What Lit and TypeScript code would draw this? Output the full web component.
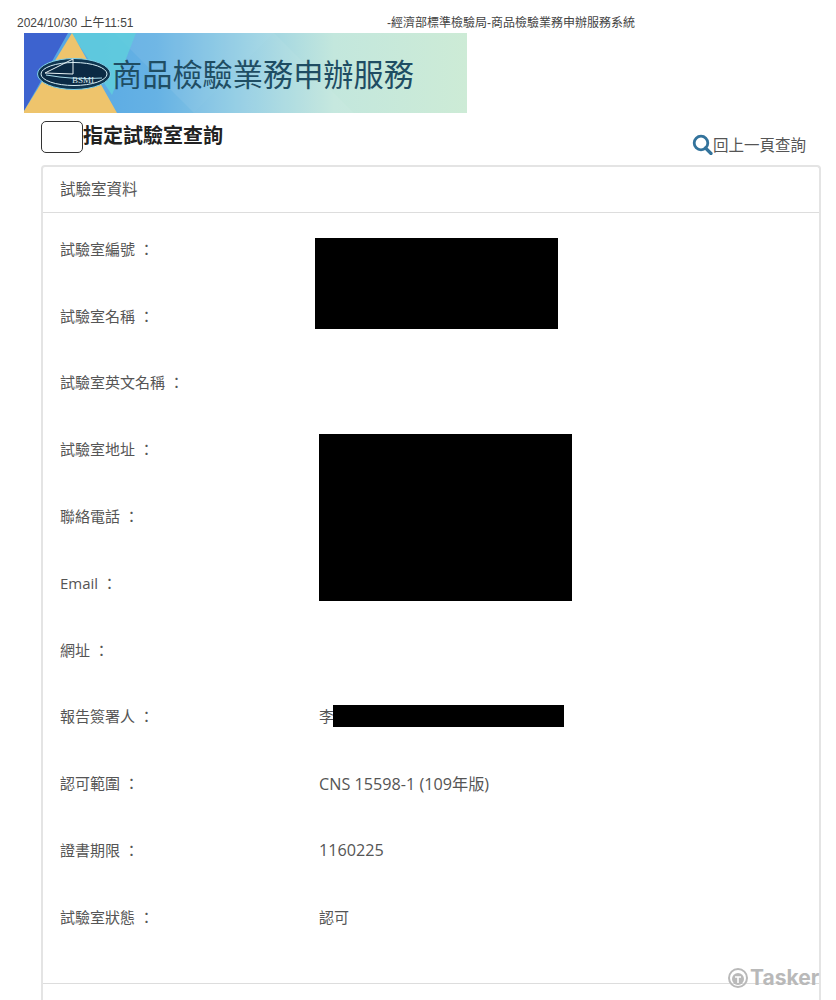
import { LitElement, html, css, svg } from "lit";
import { customElement } from "lit/decorators.js";

const rows: [string, string, boolean][] = [
  ["試驗室編號 ：", "", false],
  ["試驗室名稱 ：", "", false],
  ["試驗室英文名稱 ：", "", false],
  ["試驗室地址 ：", "", false],
  ["聯絡電話 ：", "", false],
  ["Email ：", "", false],
  ["網址 ：", "", false],
  ["報告簽署人 ：", "李", true],
  ["認可範圍 ：", "CNS 15598-1 (109年版)", false],
  ["證書期限 ：", "1160225", false],
  ["試驗室狀態 ：", "認可", true],
];

const bannerArt = svg`
  <defs>
    <linearGradient id="sky" x1="0" y1="0" x2="1" y2="0">
      <stop offset="0" stop-color="#4fa3e4"/>
      <stop offset="0.3" stop-color="#66b2e4"/>
      <stop offset="0.5" stop-color="#95cfe4"/>
      <stop offset="0.7" stop-color="#c3e7dd"/>
      <stop offset="1" stop-color="#cdebd6"/>
    </linearGradient>
  </defs>
  <rect width="443" height="80" fill="url(#sky)"/>
  <polygon points="90,0 170,80 250,0" fill="#fff" opacity="0.07"/>
  <polygon points="170,80 250,0 330,80" fill="#fff" opacity="0.06"/>
  <polygon points="47,0 112,0 88,62" fill="#5fd0dc" opacity="0.8"/>
  <polygon points="0,0 44,0 0,78" fill="#3d63cf"/>
  <polygon points="48,0 93,80 0,80 0,78" fill="#eec46c"/>
  <ellipse cx="50" cy="41" rx="36.5" ry="15.5" fill="#0f3550" stroke="#7fd0e8" stroke-width="1"/>
  <ellipse cx="50" cy="41" rx="33" ry="11.5" fill="#0b2a44" stroke="#d7eef5" stroke-width="1"/>
  <path d="M21 40 L49 26 L49 41 Z" fill="none" stroke="#e8f2f4" stroke-width="1"/>
  <path d="M22 42 Q50 47 78 45" fill="none" stroke="#a9dcec" stroke-width="1"/>
  <text x="48" y="50" font-family="Liberation Serif, serif" font-size="9" fill="#d8e6ea">BSMI</text>
`;

@customElement("app-root")
export class AppRoot extends LitElement {
  static styles = css`
    :host {
      display: block;
      width: 836px;
      height: 1000px;
      overflow: hidden;
      background: #fff;
      font-family: "Open Sans", "Noto Sans CJK TC", sans-serif;
      color: #333;
    }
    .print-head {
      height: 33px;
      box-sizing: border-box;
      padding: 16px 0 0 17px;
      display: flex;
      font: 12px/14px "Liberation Sans", "Noto Sans CJK TC", sans-serif;
      color: #444;
    }
    .print-date { width: 370px; }
    .banner {
      margin-left: 24px;
      width: 443px;
      height: 80px;
      position: relative;
    }
    .banner svg { display: block; }
    .banner-title {
      position: absolute;
      left: 88px;
      top: 18px;
      font: 30.2px/44px "Noto Sans CJK TC", sans-serif;
      color: #1f4d63;
      white-space: nowrap;
    }
    .title-row {
      display: flex;
      align-items: flex-start;
      padding: 8px 30px 0 41px;
      height: 52px;
      box-sizing: border-box;
    }
    .title-box {
      width: 40px;
      height: 30px;
      border: 1px solid #333;
      border-radius: 5px;
      background: #fff;
    }
    .title-row h1 {
      margin: 0;
      font: 700 20px/28px "Noto Sans CJK TC", sans-serif;
      color: #222;
    }
    .back {
      margin-left: auto;
      margin-top: 12px;
      display: flex;
      align-items: center;
      font: 15.5px/22px "Noto Sans CJK TC", sans-serif;
      color: #555;
    }
    .card {
      position: relative;
      margin-left: 41px;
      width: 780px;
      box-sizing: border-box;
      border: 2px solid #e4e4e4;
      border-bottom: 0;
      border-radius: 4px 4px 0 0;
      height: 900px;
    }
    .card-head {
      height: 45px;
      padding-left: 17px;
      border-bottom: 1px solid #ddd;
      font-size: 15.5px;
      line-height: 44px;
      color: #555;
    }
    .rows {
      padding: 2px 0 0 17px;
      height: 771px;
      border-bottom: 1px solid #ddd;
      box-sizing: border-box;
    }
    .row {
      display: grid;
      grid-template-columns: 259px 1fr;
      height: 66.8px;
      align-items: center;
      font-size: 15px;
      color: #555;
    }
    .value { font-size: 16.2px; }
    .value.cjk { font-size: 15px; }
    .redact { position: absolute; background: #000; }
    .r1 { left: 272px; top: 71px; width: 243px; height: 91px; }
    .r2 { left: 276px; top: 267px; width: 253px; height: 167px; }
    .r3 { left: 290px; top: 538px; width: 231px; height: 22px; }
    .mark {
      position: absolute;
      left: 727px;
      top: 966px;
      display: flex;
      align-items: center;
      gap: 1px;
      font: 700 21px/24px "Inter", "Liberation Sans", sans-serif;
      color: #b9b9b9;
    }
  `;

  render() {
    return html`
      <div class="print-head">
        <span class="print-date">2024/10/30 上午11:51</span>
        <span>-經濟部標準檢驗局-商品檢驗業務申辦服務系統</span>
      </div>
      <div class="banner">
        <svg width="443" height="80" viewBox="0 0 443 80">${bannerArt}</svg>
        <div class="banner-title">商品檢驗業務申辦服務</div>
      </div>
      <div class="title-row">
        <div class="title-box"></div>
        <h1>指定試驗室查詢</h1>
        <div class="back">
          <svg width="21" height="21" viewBox="0 0 21 21">
            <circle cx="9" cy="9" r="6.8" fill="none" stroke="#33739c" stroke-width="2.8"/>
            <path d="M13.5 14 L19 19.5" stroke="#33739c" stroke-width="3.2" stroke-linecap="round"/>
          </svg>
          <span>回上一頁查詢</span>
        </div>
      </div>
      <div class="card">
        <div class="card-head">試驗室資料</div>
        <div class="rows">
          ${rows.map(
            ([k, v, cjk]) => html`<div class="row"><span>${k}</span><span class="value ${cjk ? "cjk" : ""}">${v}</span></div>`
          )}
        </div>
        <div class="redact r1"></div>
        <div class="redact r2"></div>
        <div class="redact r3"></div>
      </div>
      <div class="mark">
        <svg width="22" height="22" viewBox="0 0 22 22">
          <circle cx="11" cy="11" r="9" fill="none" stroke="#b9b9b9" stroke-width="2"/>
          <circle cx="11" cy="12" r="6" fill="#b9b9b9"/>
          <path d="M8 10 H14 M11 10 V16" stroke="#fff" stroke-width="1.6"/>
        </svg>
        <span>Tasker</span>
      </div>
    `;
  }
}
